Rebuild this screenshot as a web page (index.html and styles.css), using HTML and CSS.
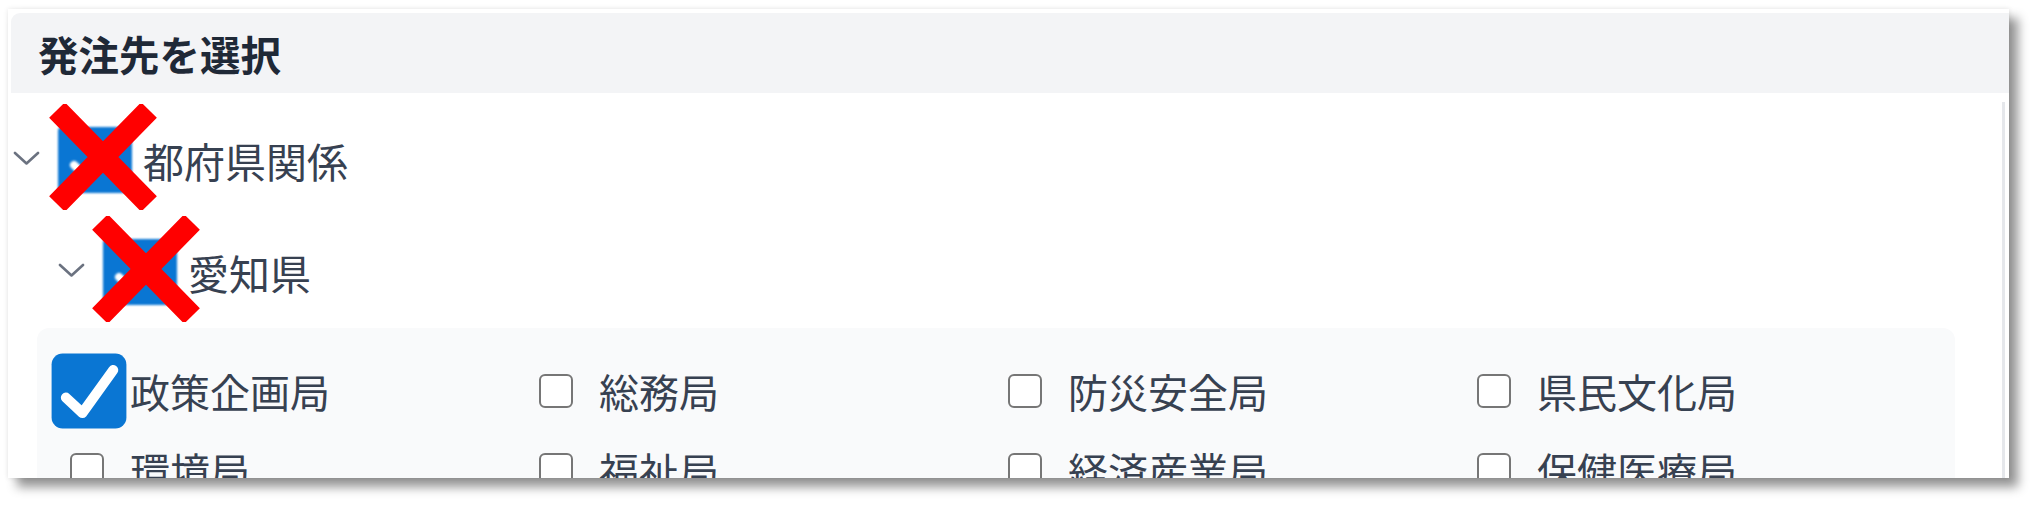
FILE: index.html
```html
<!DOCTYPE html>
<html lang="ja">
<head>
<meta charset="utf-8">
<title>発注先を選択</title>
<link rel="stylesheet" href="styles.css">
</head>
<body>
<div class="frame">
  <div class="header">発注先を選択</div>
  <div class="body">
    <div class="content">
      <div class="tree-row level1">
        <svg class="chevron" viewBox="0 0 27 14" width="27" height="14"><path d="M2 2 L13.5 12.5 L25 2" fill="none" stroke="#6b7280" stroke-width="2.6" stroke-linecap="round" stroke-linejoin="round"/></svg>
        <span class="tree-box"><svg viewBox="0 0 74 66" width="74" height="66"><path d="M16 38 L29 50 L58 16" fill="none" stroke="#fff" stroke-width="8" stroke-linecap="round" stroke-linejoin="round"/></svg></span>
        <span class="tree-label">都府県関係</span>
        <svg class="cross" viewBox="0 0 112 106" width="112" height="106"><path d="M10 6 L102 100 M102 6 L10 100" stroke="#ff0000" stroke-width="22" fill="none"/></svg>
      </div>
      <div class="tree-row level2">
        <svg class="chevron" viewBox="0 0 27 14" width="27" height="14"><path d="M2 2 L13.5 12.5 L25 2" fill="none" stroke="#6b7280" stroke-width="2.6" stroke-linecap="round" stroke-linejoin="round"/></svg>
        <span class="tree-box"><svg viewBox="0 0 74 66" width="74" height="66"><path d="M16 38 L29 50 L58 16" fill="none" stroke="#fff" stroke-width="8" stroke-linecap="round" stroke-linejoin="round"/></svg></span>
        <span class="tree-label">愛知県</span>
        <svg class="cross" viewBox="0 0 112 106" width="112" height="106"><path d="M10 6 L102 100 M102 6 L10 100" stroke="#ff0000" stroke-width="22" fill="none"/></svg>
      </div>
      <div class="panel">
        <div class="grid">
          <label class="item"><span class="box checked"><svg viewBox="0 0 34 34" width="34" height="34"><path d="M6.5 20 L14 27 L28 7.5" fill="none" stroke="#fff" stroke-width="4.6" stroke-linecap="round" stroke-linejoin="round"/></svg></span><span class="label">政策企画局</span></label>
          <label class="item"><span class="box"></span><span class="label">総務局</span></label>
          <label class="item"><span class="box"></span><span class="label">防災安全局</span></label>
          <label class="item"><span class="box"></span><span class="label">県民文化局</span></label>
          <label class="item"><span class="box"></span><span class="label">環境局</span></label>
          <label class="item"><span class="box"></span><span class="label">福祉局</span></label>
          <label class="item"><span class="box"></span><span class="label">経済産業局</span></label>
          <label class="item"><span class="box"></span><span class="label">保健医療局</span></label>
        </div>
      </div>
    </div>
    <div class="scroll-track"></div>
  </div>
</div>
</body>
</html>
```

FILE: styles.css
```css
* { box-sizing: border-box; }

html, body {
  margin: 0;
  padding: 0;
  background: #ffffff;
}

body {
  width: 2038px;
  height: 507px;
  overflow: hidden;
  font-family: "Noto Sans CJK JP", "Noto Sans", sans-serif;
  padding: 9px 0 0 8px;
}

.frame {
  width: 2001px;
  height: 469px;
  background: #ffffff;
  overflow: hidden;
  padding: 4px 0 0 3px;
  display: flex;
  flex-direction: column;
  box-shadow: 9px 9px 10px rgba(0, 0, 0, 0.42), 0 0 5px rgba(0, 0, 0, 0.10);
}

.header {
  flex: 0 0 80px;
  height: 80px;
  background: #f3f4f6;
  border-radius: 9px 0 0 0;
  display: flex;
  align-items: center;
  padding-left: 27px;
  font-size: 40.5px;
  font-weight: 700;
  color: #1f2937;
}

.body {
  flex: 1;
  display: flex;
  min-height: 0;
}

.content {
  flex: 1;
  display: flex;
  flex-direction: column;
  padding-top: 11px;
}

.scroll-track {
  flex: 0 0 3px;
  width: 3px;
  margin: 9px 4px 0 0;
  background: #e5e7eb;
}

.tree-row {
  position: relative;
  height: 112px;
  flex: 0 0 112px;
  display: flex;
  align-items: center;
}

.level1 { padding-left: 2px; }
.level2 { padding-left: 47px; }

.chevron {
  flex: 0 0 27px;
  margin-right: 18px;
  margin-top: -4px;
}

.tree-box {
  flex: 0 0 74px;
  width: 74px;
  height: 66px;
  background: #0a76d3;
  border-radius: 4px;
  filter: blur(0.8px);
  margin-right: 11px;
  display: flex;
}

.tree-label {
  font-size: 41px;
  color: #374151;
  line-height: 1;
}

.cross {
  position: absolute;
  top: 50%;
  margin-top: -56px;
}

.level1 .cross { left: 36px; }
.level2 .cross { left: 79px; }

.panel {
  margin: 0 47px 0 26px;
  background: #f9fafb;
  border-radius: 12px 12px 0 0;
  padding: 23px 9px 0 33px;
  flex: 1;
}

.grid {
  display: grid;
  grid-template-columns: repeat(4, 1fr);
}

.item {
  height: 79px;
  display: flex;
  align-items: center;
}

.box {
  flex: 0 0 34px;
  width: 34px;
  height: 34px;
  border: 2px solid #767676;
  border-radius: 6px;
  background: #ffffff;
  margin-right: 26px;
  display: flex;
}

.box.checked {
  border: none;
  background: #0a76d3;
  border-radius: 5px;
  transform: translate(2px, 0) scale(2.2);
}

.label {
  font-size: 40px;
  color: #374151;
  line-height: 1;
}
```
